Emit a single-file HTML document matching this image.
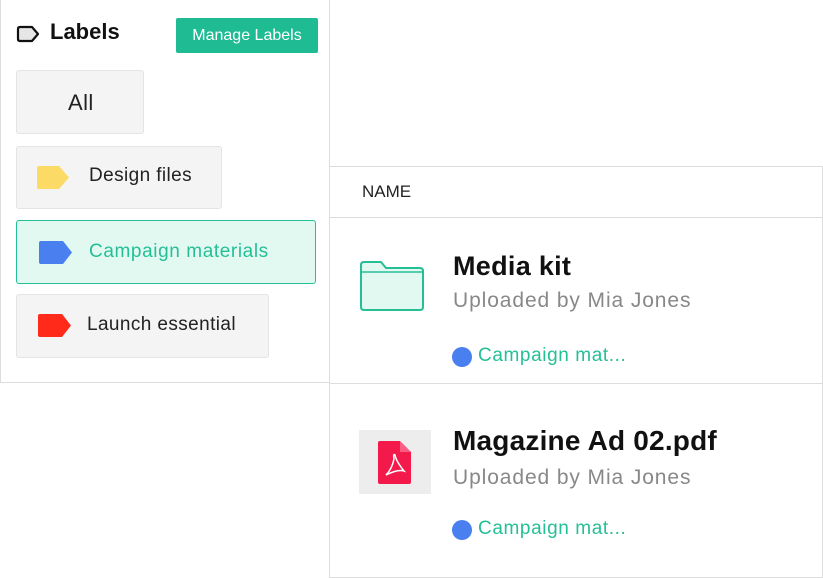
<!DOCTYPE html>
<html><head><style>
body{margin:0;width:823px;height:578px;background:#fff;font-family:"Liberation Sans",sans-serif;position:relative;overflow:hidden}
.a{position:absolute}
.lp{left:0;top:0;width:328px;height:382px;border:1px solid #ddd;border-top:none;border-left:1px solid #ddd}
.rp{left:329px;top:166px;width:492px;height:410px;border:1px solid #ddd}
.btn{background:#f4f4f4;border:1px solid #e4e4e4;border-radius:3px;box-sizing:border-box}
.t{font-size:19px;color:#222;letter-spacing:0.4px}
</style></head><body>
<div class="a lp"></div>
<svg class="a" style="left:16px;top:25px" width="26" height="18"><path d="M4 2H16L22 9L16 16H4Q2 16 2 14V4Q2 2 4 2Z" fill="#e6e6e6" stroke="#111" stroke-width="2.2" stroke-linejoin="round"/></svg>
<div class="a" style="left:50px;top:19px;font-size:22px;font-weight:bold;color:#111">Labels</div>
<div class="a" style="left:176px;top:18px;width:142px;height:35px;background:#1fbc93;border-radius:2px;color:#fff;font-size:16px;line-height:35px;text-align:center">Manage Labels</div>
<div class="a btn" style="left:16px;top:70px;width:128px;height:64px"></div>
<div class="a t" style="left:68px;top:90px;font-size:22px">All</div>
<div class="a btn" style="left:16px;top:146px;width:206px;height:63px"></div>
<svg class="a" style="left:35px;top:165px" width="36" height="26"><path d="M4 1H24L34 12.5L24 24H4Q2 24 2 22V3Q2 1 4 1Z" fill="#fbdb66"/></svg>
<div class="a t" style="left:89px;top:165px">Design files</div>
<div class="a" style="left:16px;top:220px;width:300px;height:64px;background:#e2f9f1;border:1px solid #25bf96;border-radius:3px;box-sizing:border-box"></div>
<svg class="a" style="left:37px;top:240px" width="36" height="26"><path d="M4 1H26L35 12.5L26 24H4Q2 24 2 22V3Q2 1 4 1Z" fill="#4a7ff0"/></svg>
<div class="a" style="left:89px;top:241px;font-size:19px;color:#25bf96;letter-spacing:0.6px">Campaign materials</div>
<div class="a btn" style="left:16px;top:294px;width:253px;height:64px"></div>
<svg class="a" style="left:36px;top:313px" width="36" height="26"><path d="M4 1H26L35 12.5L26 24H4Q2 24 2 22V3Q2 1 4 1Z" fill="#ff2a1a"/></svg>
<div class="a t" style="left:87px;top:314px">Launch essential</div>
<div class="a rp"></div>
<div class="a" style="left:362px;top:182px;font-size:17px;color:#222">NAME</div>
<div class="a" style="left:330px;top:217px;width:492px;height:1px;background:#ddd"></div>
<div class="a" style="left:330px;top:383px;width:492px;height:1px;background:#ddd"></div>
<svg class="a" style="left:359px;top:260px" width="66" height="52"><path d="M2 5Q2 2 5 2H22L27 8H61Q64 8 64 11V47Q64 50 61 50H5Q2 50 2 47Z" fill="#e2f9f1" stroke="#25bf96" stroke-width="2"/><path d="M2 12H64" stroke="#25bf96" stroke-width="1.5"/></svg>
<div class="a" style="left:453px;top:251px;font-size:27px;font-weight:bold;color:#111;letter-spacing:0.3px">Media kit</div>
<div class="a" style="left:453px;top:289px;font-size:21px;color:#888;letter-spacing:0.9px">Uploaded by Mia Jones</div>
<div class="a" style="left:452px;top:347px;width:20px;height:20px;border-radius:50%;background:#4a7ff0"></div>
<div class="a" style="left:478px;top:345px;font-size:19px;color:#25bf96;letter-spacing:0.6px">Campaign mat...</div>
<div class="a" style="left:359px;top:430px;width:72px;height:64px;background:#ededed"></div>
<svg class="a" style="left:378px;top:441px" width="34" height="43"><path d="M2 0H22L33 11V41Q33 43 31 43H2Q0 43 0 41V2Q0 0 2 0Z" fill="#f31a4b"/><path d="M22 0V11H33" fill="#f8a" opacity=".6"/><path d="M8 34Q14 28 16 18Q15 12 17 14Q18 20 26 30Q20 28 8 34Z" fill="none" stroke="#fff" stroke-width="1.5"/></svg>
<div class="a" style="left:453px;top:425px;font-size:28px;font-weight:bold;color:#111;letter-spacing:0.2px">Magazine Ad 02.pdf</div>
<div class="a" style="left:453px;top:466px;font-size:21px;color:#888;letter-spacing:0.9px">Uploaded by Mia Jones</div>
<div class="a" style="left:452px;top:520px;width:20px;height:20px;border-radius:50%;background:#4a7ff0"></div>
<div class="a" style="left:478px;top:518px;font-size:19px;color:#25bf96;letter-spacing:0.6px">Campaign mat...</div>
</body></html>
